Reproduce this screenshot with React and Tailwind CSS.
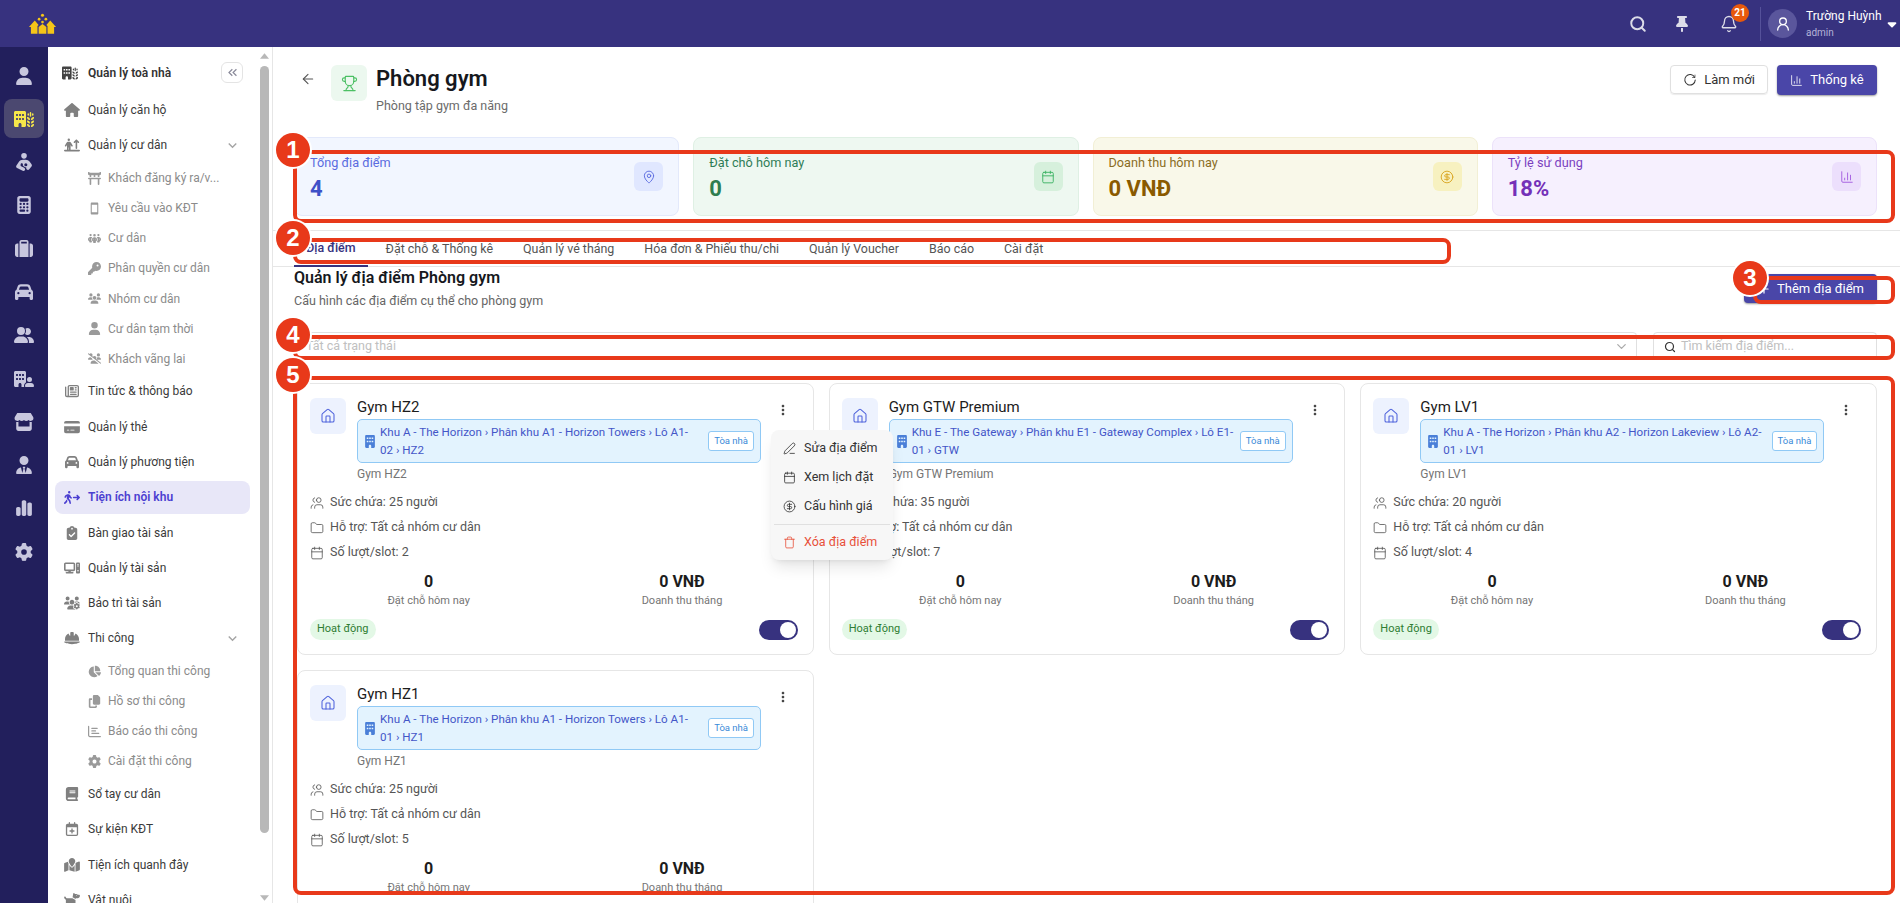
import {
  FaUser, FaBuildingWheat, FaPersonBreastfeeding, FaCalculator, FaSuitcase, FaCar, FaUserGroup, FaBuildingUser,
  FaStore, FaUserTie, FaChartSimple, FaGear, FaHouse, FaPersonArrowUpFromLine, FaToriiGate, FaPeopleGroup, FaKey,
  FaUsers, FaUsersSlash, FaRegNewspaper, FaCreditCard, FaPersonWalkingArrowRight, FaClipboardCheck, FaComputer,
  FaUsersGear, FaHelmetSafety, FaChartPie, FaCopy, FaRegChartBar, FaBook, FaRegCalendarPlus, FaMapLocation, FaDog,
  FaThumbtack, FaBuilding, FaCaretDown,
} from 'react-icons/fa6'
import { MdOutlineSmartphone, MdKeyboardDoubleArrowLeft, MdExpandMore, MdMoreVert } from 'react-icons/md'
import {
  ArrowLeft, Trophy, MapPin, Calendar, CircleDollarSign, ChartColumn, Plus, Search, ChevronDown, Users, House, Folder,
  PenLine, Trash, Bell, UserRound,
} from 'lucide-react'

function Logo() {
  return (
    <svg viewBox="0 0 30 22" className="w-[29px] h-[22px]" fill="#f5c518">
      <circle cx="15" cy="2" r="1.6" />
      <circle cx="11.5" cy="6" r="1.4" />
      <circle cx="18.5" cy="6" r="1.4" />
      <circle cx="15" cy="9" r="1.4" />
      <path d="M1 14 L7 7.5 L11 12 L9.8 13 L9.8 21 L3 21 L3 14 Z" />
      <path d="M11 21 L11 14 L15 11 L19 14 L19 21 Z" />
      <path d="M29 14 L23 7.5 L19 12 L20.2 13 L20.2 21 L27 21 L27 14 Z" />
    </svg>
  )
}

function Refresh({ className }) {
  return (
    <svg viewBox="0 0 24 24" className={className} fill="none" stroke="currentColor" strokeWidth="1.8" strokeLinecap="round">
      <path d="M20 7.5A9 9 0 1 0 21 12" />
      <path d="M20.5 3.5v4.2h-4.2" strokeWidth="1.2" />
    </svg>
  )
}

const railIcons = [
  FaUser, FaBuildingWheat, FaPersonBreastfeeding, FaCalculator, FaSuitcase, FaCar, FaUserGroup, FaBuildingUser,
  FaStore, FaUserTie, FaChartSimple, FaGear,
]

function Rail() {
  return (
    <div className="w-12 shrink-0 bg-[#221f5c] flex flex-col items-center pt-[9px] text-[#c8c7de]">
      {railIcons.map((Icon, i) => (
        <div key={i} className={`w-10 h-[39px] mb-[4.3px] flex items-center justify-center rounded-lg ${i === 1 ? 'bg-[#4b4870] text-[#f7e84a]' : ''}`}>
          <Icon className="w-[20px] h-[18px]" />
        </div>
      ))}
    </div>
  )
}

const menu = [
  { label: 'Quản lý căn hộ', icon: FaHouse },
  { label: 'Quản lý cư dân', icon: FaPersonArrowUpFromLine, open: true },
  { label: 'Khách đăng ký ra/v...', icon: FaToriiGate, sub: true },
  { label: 'Yêu cầu vào KĐT', icon: MdOutlineSmartphone, sub: true },
  { label: 'Cư dân', icon: FaPeopleGroup, sub: true },
  { label: 'Phân quyền cư dân', icon: FaKey, sub: true },
  { label: 'Nhóm cư dân', icon: FaUsers, sub: true },
  { label: 'Cư dân tạm thời', icon: FaUser, sub: true },
  { label: 'Khách vãng lai', icon: FaUsersSlash, sub: true },
  { label: 'Tin tức & thông báo', icon: FaRegNewspaper },
  { label: 'Quản lý thẻ', icon: FaCreditCard },
  { label: 'Quản lý phương tiện', icon: FaCar },
  { label: 'Tiện ích nội khu', icon: FaPersonWalkingArrowRight, active: true },
  { label: 'Bàn giao tài sản', icon: FaClipboardCheck },
  { label: 'Quản lý tài sản', icon: FaComputer },
  { label: 'Bảo trì tài sản', icon: FaUsersGear },
  { label: 'Thi công', icon: FaHelmetSafety, open: true },
  { label: 'Tổng quan thi công', icon: FaChartPie, sub: true },
  { label: 'Hồ sơ thi công', icon: FaCopy, sub: true },
  { label: 'Báo cáo thi công', icon: FaRegChartBar, sub: true },
  { label: 'Cài đặt thi công', icon: FaGear, sub: true },
  { label: 'Sổ tay cư dân', icon: FaBook },
  { label: 'Sự kiện KĐT', icon: FaRegCalendarPlus },
  { label: 'Tiện ích quanh đây', icon: FaMapLocation },
  { label: 'Vật nuôi', icon: FaDog },
]

function Sidebar() {
  return (
    <div className="w-[225px] shrink-0 flex border-r border-[#e6e6e6] overflow-hidden">
      <div className="w-[212px] shrink-0 pt-[6px]">
        <div className="h-[39.5px] flex items-center pl-[14px]">
          <FaBuildingWheat className="w-[16px] h-[14px] mr-[10px] text-[#424242]" />
          <span className="text-[12px] font-semibold text-[#333]">Quản lý toà nhà</span>
          <div className="ml-auto mr-[17px] w-[22px] h-[21px] border border-[#e4e4e4] rounded-md flex items-center justify-center text-[#8a8a9a]">
            <MdKeyboardDoubleArrowLeft className="w-[15px] h-[15px]" />
          </div>
        </div>
        {menu.map((item) => {
          const Icon = item.icon
          if (item.sub) {
            return (
              <div key={item.label} className="h-[30.1px] flex items-center pl-[40px] text-[12px] text-[#8b8b8b]">
                <Icon className="w-[13px] h-[13px] mr-[7px] text-[#9a9a9a]" />
                <span className="whitespace-nowrap">{item.label}</span>
              </div>
            )
          }
          if (item.active) {
            return (
              <div key={item.label} className="h-[35.3px] flex items-center">
                <div className="ml-[7px] w-[195px] h-[33px] rounded-lg bg-[#e8e7f8] flex items-center pl-[9px] text-[12px] font-semibold text-[#4b3fd1]">
                  <Icon className="w-[16px] h-[15px] mr-[8px]" />
                  {item.label}
                </div>
              </div>
            )
          }
          return (
            <div key={item.label} className="h-[35.3px] flex items-center pl-[16px] text-[12px] text-[#3a3a3a]">
              <Icon className="w-[16px] h-[14px] mr-[8px] text-[#808080]" />
              <span className="whitespace-nowrap">{item.label}</span>
              {item.open && <MdExpandMore className="ml-auto mr-[19px] w-[17px] h-[17px] text-[#a5a5a5]" />}
            </div>
          )
        })}
      </div>
      <div className="w-[9px] shrink-0 flex flex-col items-center">
        <svg viewBox="0 0 10 6" className="w-[9px] h-[6px] mt-[6px] mb-[7px]" fill="#b8b8b8"><path d="M5 0l5 6H0z" /></svg>
        <div className="w-[9px] h-[767px] rounded-md bg-[#b8b8b8]" />
        <svg viewBox="0 0 10 6" className="w-[9px] h-[6px] mt-[62px]" fill="#b8b8b8"><path d="M5 6L0 0h10z" /></svg>
      </div>
    </div>
  )
}

const stats = [
  { label: 'Tổng địa điểm', value: '4', icon: MapPin, box: 'bg-[#f2f6ff] border-[#e3e9fb]', lab: 'text-[#5a6be0]', val: 'text-[#3f51c8]', ib: 'bg-[#e0e7ff]', ic: 'text-[#5a6be0]' },
  { label: 'Đặt chỗ hôm nay', value: '0', icon: Calendar, box: 'bg-[#eef8f1] border-[#dff0e4]', lab: 'text-[#2e7d57]', val: 'text-[#2e7d4f]', ib: 'bg-[#d6f0dc]', ic: 'text-[#3cb364]' },
  { label: 'Doanh thu hôm nay', value: '0 VNĐ', icon: CircleDollarSign, box: 'bg-[#f9f8e9] border-[#f2efd5]', lab: 'text-[#8a6d1f]', val: 'text-[#8a5a00]', ib: 'bg-[#f7f1c0]', ic: 'text-[#d9a520]' },
  { label: 'Tỷ lệ sử dụng', value: '18%', icon: ChartColumn, box: 'bg-[#f6f0fe] border-[#ece2fa]', lab: 'text-[#7b3fc0]', val: 'text-[#7430b8]', ib: 'bg-[#ecdffc]', ic: 'text-[#a45ee0]' },
]

const tabs = ['Địa điểm', 'Đặt chỗ & Thống kê', 'Quản lý vé tháng', 'Hóa đơn & Phiếu thu/chi', 'Quản lý Voucher', 'Báo cáo', 'Cài đặt']

const gyms = [
  { name: 'Gym HZ2', path: ['Khu A - The Horizon › Phân khu A1 - Horizon Towers › Lô A1-', '02 › HZ2'], cap: 25, slot: 2 },
  { name: 'Gym GTW Premium', path: ['Khu E - The Gateway › Phân khu E1 - Gateway Complex › Lô E1-', '01 › GTW'], cap: 35, slot: 7 },
  { name: 'Gym LV1', path: ['Khu A - The Horizon › Phân khu A2 - Horizon Lakeview › Lô A2-', '01 › LV1'], cap: 20, slot: 4 },
  { name: 'Gym HZ1', path: ['Khu A - The Horizon › Phân khu A1 - Horizon Towers › Lô A1-', '01 › HZ1'], cap: 25, slot: 5 },
]

function GymCard({ gym, children }) {
  return (
    <div className="relative h-[272px] bg-white border border-[#e6e6e6] rounded-lg px-[12px] pt-[14px]">
      <div className="flex">
        <div className="w-9 h-9 shrink-0 rounded-md bg-[#edf2fe] flex items-center justify-center text-[#5064dc]">
          <House className="w-[16px] h-[16px]" strokeWidth={1.6} />
        </div>
        <div className="ml-[11px] w-[404px]">
          <div className="h-[21px] text-[15px] leading-[19px] text-[#1c1c1c]">{gym.name}</div>
          <div className="h-[44px] flex items-center bg-[#e3f3fe] border border-[#90c9f5] rounded-[5px] pl-[7px] pr-[6px]">
            <FaBuilding className="w-[10px] h-[13px] shrink-0 text-[#4a7fd8] mr-[5px]" />
            <div className="flex-1 text-[11.6px] leading-[18px] text-[#4356c8] whitespace-nowrap">
              {gym.path.map((line) => <div key={line}>{line}</div>)}
            </div>
            <div className="ml-[5px] shrink-0 h-[20px] px-[5px] border border-[#90c9f5] rounded-[3px] bg-white text-[9.5px] leading-[18px] text-[#3a8ad8]">Tòa nhà</div>
          </div>
          <div className="mt-[2px] h-[18px] text-[12px] leading-[18px] text-[#757575]">{gym.name}</div>
        </div>
        <MdMoreVert className="ml-[14px] mt-[4px] w-[16px] h-[16px] text-[#444]" />
      </div>
      <div className="mt-[7px] text-[12.5px] text-[#555]">
        <div className="h-[25px] flex items-center"><Users className="w-[14px] h-[14px] mr-[6px] -scale-x-100" strokeWidth={1.4} />Sức chứa: {gym.cap} người</div>
        <div className="h-[25px] flex items-center"><Folder className="w-[14px] h-[14px] mr-[6px]" strokeWidth={1.4} />Hỗ trợ: Tất cả nhóm cư dân</div>
        <div className="h-[25px] flex items-center"><Calendar className="w-[14px] h-[14px] mr-[6px]" strokeWidth={1.4} />Số lượt/slot: {gym.slot}</div>
      </div>
      <div className="mt-[7px] grid grid-cols-2 gap-4 text-center">
        <div>
          <div className="h-[20px] text-[16px] leading-[20px] font-bold text-[#1c1c1c]">0</div>
          <div className="h-[17px] text-[11px] leading-[17px] text-[#757575]">Đặt chỗ hôm nay</div>
        </div>
        <div>
          <div className="h-[20px] text-[16px] leading-[20px] font-bold text-[#1c1c1c]">0 VNĐ</div>
          <div className="h-[17px] text-[11px] leading-[17px] text-[#757575]">Doanh thu tháng</div>
        </div>
      </div>
      <div className="mt-[10px] flex items-center justify-between">
        <span className="h-[21px] px-[7px] rounded-full bg-[#e3f8e6] text-[11px] leading-[20px] text-[#2e7d32]">Hoạt động</span>
        <div className="mr-[3px] w-[39px] h-[20px] rounded-full bg-[#37327f] flex items-center justify-end pr-[2px]">
          <div className="w-[16px] h-[16px] rounded-full bg-white" />
        </div>
      </div>
      {children}
    </div>
  )
}

function ActionMenu() {
  return (
    <div className="absolute z-10 left-[473px] top-[46px] w-[122px] h-[130px] rounded-lg bg-[#f7f7f7] shadow-lg text-[12.5px] text-[#333]">
      <div className="h-[29px] mt-[4px] flex items-center pl-[12px]"><PenLine className="w-[13px] h-[13px] mr-[8px]" strokeWidth={1.5} />Sửa địa điểm</div>
      <div className="h-[29px] flex items-center pl-[12px]"><Calendar className="w-[13px] h-[13px] mr-[8px]" strokeWidth={1.5} />Xem lịch đặt</div>
      <div className="h-[29px] flex items-center pl-[12px]"><CircleDollarSign className="w-[13px] h-[13px] mr-[8px]" strokeWidth={1.5} />Cấu hình giá</div>
      <div className="mx-[3px] mt-[3px] border-t border-[#e0e0e0]" />
      <div className="h-[34px] flex items-center pl-[12px] text-[#e8503a]"><Trash className="w-[13px] h-[13px] mr-[8px]" strokeWidth={1.5} />Xóa địa điểm</div>
    </div>
  )
}

const marks = [
  { n: 1, rect: 'left-[293px] top-[150px] w-[1602px] h-[73px]', dot: 'left-[276px] top-[133px]' },
  { n: 2, rect: 'left-[293px] top-[238px] w-[1158px] h-[26px]', dot: 'left-[276px] top-[221px]' },
  { n: 3, rect: 'left-[1753px] top-[276px] w-[142px] h-[28px]', dot: 'left-[1733px] top-[261px]' },
  { n: 4, rect: 'left-[293px] top-[335px] w-[1602px] h-[25px]', dot: 'left-[276px] top-[318px]' },
  { n: 5, rect: 'left-[293px] top-[376px] w-[1602px] h-[519px]', dot: 'left-[276px] top-[358px]' },
]

function Marks() {
  return (
    <>
      {marks.map((m) => (
        <div key={m.n}>
          <div className={`absolute z-20 border-4 border-[#e8391a] rounded-lg ${m.rect}`} />
          <div className={`absolute z-30 w-[34px] h-[34px] rounded-full bg-[#e8391a] ring-2 ring-white flex items-center justify-center text-white text-[24px] font-bold [font-family:'Liberation_Sans',sans-serif] ${m.dot}`}>{m.n}</div>
        </div>
      ))}
    </>
  )
}

export default function App() {
  return (
    <div className="relative h-[903px] w-[1900px] overflow-hidden flex flex-col bg-white [font-family:Roboto,'Noto_Sans',sans-serif]">
      {/* top bar */}
      <div className="h-[47px] shrink-0 bg-[#37327f] flex items-center text-white">
        <div className="ml-[28px]"><Logo /></div>
        <div className="ml-auto flex items-center">
          <Search className="w-[18px] h-[18px] text-[#dcdce8]" strokeWidth={2.6} />
          <FaThumbtack className="ml-[27px] w-[16px] h-[16px] text-[#dcdce8]" />
          <div className="relative ml-[30px]">
            <Bell className="w-[18px] h-[18px] text-[#dcdce8]" strokeWidth={1.8} />
            <span className="absolute -top-[11px] left-[11px] w-[18px] h-[18px] rounded-full bg-[#e8590c] text-[10px] font-bold leading-[18px] text-center">21</span>
          </div>
          <div className="ml-[22px] w-px h-[34px] bg-[#55519a]" />
          <div className="ml-[7px] w-[29px] h-[29px] rounded-full bg-[#5a569c] flex items-center justify-center">
            <UserRound className="w-[16px] h-[16px]" strokeWidth={2} />
          </div>
          <div className="ml-[9px] w-[79px]">
            <div className="text-[12px] leading-[18px] whitespace-nowrap">Trường Huỳnh</div>
            <div className="text-[10px] leading-[16px] text-[#b5b3d8]">admin</div>
          </div>
          <FaCaretDown className="w-[14px] h-[14px] mr-[1px]" />
        </div>
      </div>

      <div className="flex flex-1 min-h-0">
        <Rail />
        <Sidebar />

        <main className="flex-1 min-w-0 pl-[21px] pr-[23px] pt-[18px]">
          <div className="h-[50px] mb-[22px] flex items-start">
            <ArrowLeft className="ml-[6px] mt-[6px] w-[16px] h-[16px] text-[#555]" strokeWidth={1.6} />
            <div className="ml-[15px] w-9 h-9 rounded-md bg-[#ecf8ef] flex items-center justify-center text-[#4cc064]">
              <Trophy className="w-[17px] h-[17px]" strokeWidth={1.6} />
            </div>
            <div className="ml-[9px]">
              <div className="text-[22px] leading-[28px] font-semibold text-[#16181d]">Phòng gym</div>
              <div className="mt-[4px] text-[12.5px] leading-[18px] text-[#6b6b6b]">Phòng tập gym đa năng</div>
            </div>
            <div className="ml-auto flex gap-[9px]">
              <button className="h-[29px] w-[98px] rounded border border-[#e0e0e0] shadow-[0_1px_1px_rgba(0,0,0,0.08)] flex items-center justify-center text-[13px] text-[#333]">
                <Refresh className="w-[14px] h-[14px] mr-[7px]" />Làm mới
              </button>
              <button className="h-[30px] w-[100px] rounded bg-[#4a46a8] shadow-[0_1px_2px_rgba(0,0,0,0.4)] flex items-center justify-center text-[13px] text-white">
                <ChartColumn className="w-[13px] h-[13px] mr-[7px]" strokeWidth={1.5} />Thống kê
              </button>
            </div>
          </div>

          <div className="grid grid-cols-4 gap-[14px]">
            {stats.map((s) => {
              const Icon = s.icon
              return (
                <div key={s.label} className={`h-[79px] rounded-lg border flex items-center justify-between px-[15px] ${s.box}`}>
                  <div className="pt-[4px]">
                    <div className={`text-[12.7px] leading-[18px] ${s.lab}`}>{s.label}</div>
                    <div className={`mt-[3px] text-[22px] leading-[28px] font-bold ${s.val}`}>{s.value}</div>
                  </div>
                  <div className={`w-[29px] h-[29px] rounded-md flex items-center justify-center ${s.ib}`}>
                    <Icon className={`w-[14px] h-[14px] ${s.ic}`} strokeWidth={1.6} />
                  </div>
                </div>
              )
            })}
          </div>

          <div className="mt-[14px] -ml-[21px] -mr-[23px] pl-[21px] h-[37px] border-y border-[#e6e6e6] flex gap-[6px]">
            {tabs.map((t, i) => (
              <div key={t} className={`px-3 h-[36px] pt-[1px] flex items-center text-[12.45px] whitespace-nowrap ${i === 0 ? 'text-[#37327f] border-b-2 border-[#37327f] font-medium' : 'text-[#555]'}`}>{t}</div>
            ))}
          </div>

          <div className="h-[65px] flex justify-between items-start">
            <div>
              <div className="text-[16px] leading-[22px] font-semibold text-[#16181d]">Quản lý địa điểm Phòng gym</div>
              <div className="mt-[3px] text-[12.5px] leading-[18px] text-[#666]">Cấu hình các địa điểm cụ thể cho phòng gym</div>
            </div>
            <button className="mt-[7px] w-[133px] h-[29px] rounded bg-[#4a46a8] shadow-[0_1px_2px_rgba(0,0,0,0.4)] flex items-center justify-center gap-[6px] text-[13px] text-white">
              <Plus className="w-[14px] h-[14px]" />Thêm địa điểm
            </button>
          </div>

          <div className="flex gap-[16px]">
            <div className="flex-1 h-[28px] pt-[1px] border border-[#e0e0e0] rounded flex items-center justify-between pl-[11px] pr-[7px] text-[12.5px] text-[#c0c0c0]">
              Tất cả trạng thái
              <ChevronDown className="w-[15px] h-[15px] text-[#aaa]" />
            </div>
            <div className="w-[224px] h-[28px] pt-[1px] border border-[#e0e0e0] rounded flex items-center pl-[10px] text-[12.5px] text-[#c0c0c0]">
              <Search className="w-[12px] h-[12px] mr-[5px] text-[#333]" strokeWidth={2.4} />Tìm kiếm địa điểm...
            </div>
          </div>

          <div className="mt-[23px] ml-[3px] grid grid-cols-3 gap-x-[15px] gap-y-[15px]">
            {gyms.map((g, i) => (
              <GymCard key={g.name} gym={g}>{i === 0 && <ActionMenu />}</GymCard>
            ))}
          </div>
        </main>
      </div>
      <Marks />
    </div>
  )
}
